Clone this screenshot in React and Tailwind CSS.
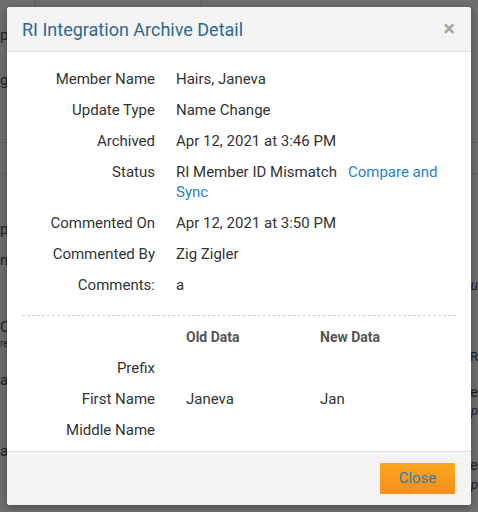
import React from 'react';

const details = [
    { label: 'Member Name', value: 'Hairs, Janeva' },
    { label: 'Update Type', value: 'Name Change' },
    { label: 'Archived', value: 'Apr 12, 2021 at 3:46 PM' },
    { label: 'Status', value: 'RI Member ID Mismatch', link: 'Compare and Sync' },
    { label: 'Commented On', value: 'Apr 12, 2021 at 3:50 PM' },
    { label: 'Commented By', value: 'Zig Zigler' },
    { label: 'Comments:', value: 'a' },
];

const changes = [
    { label: 'Prefix', old: '', next: '' },
    { label: 'First Name', old: 'Janeva', next: 'Jan' },
    { label: 'Middle Name', old: '', next: '' },
];

const Backdrop = () => (
    <div className="absolute inset-0 bg-[#6f6f6f] text-[#222] text-[15px] overflow-hidden">
        <div className="h-[6px] flex">
            <div className="w-[36px] border-r border-[#5d5d5d]" />
            <div className="w-[166px] border-r border-[#5d5d5d]" />
        </div>
        <div className="pt-[22px] leading-none">p</div>
        <div className="pt-[30px] leading-none">g</div>
        <div className="mt-[54px] border-t border-[#626262]" />
        <div className="mt-[30px] border-t border-[#626262]" />
        <div className="mt-[48px] leading-none">p</div>
        <div className="mt-[16px] leading-none">n</div>
        <div className="mt-[52px] leading-none">C</div>
        <div className="mt-[4px] text-[10px] leading-none">re</div>
        <div className="mt-[24px] leading-none">a</div>
        <div className="mt-[56px] leading-none">a</div>
        <div className="absolute right-0 top-[278px] text-[14px] italic leading-none text-right">lu</div>
        <div className="absolute right-0 top-[350px] text-[13px] leading-none">R</div>
        <div className="absolute right-0 top-[385px] leading-none">Se</div>
        <div className="absolute right-0 top-[404px] text-[13px] italic leading-none">p</div>
        <div className="absolute right-0 top-[458px] leading-none">Se</div>
        <div className="absolute right-0 top-[478px] text-[13px] italic leading-none">p</div>
    </div>
);

export default function App() {
    return (
        <div className="relative w-[478px] h-[512px] overflow-hidden" style={{ fontFamily: 'Roboto, "Liberation Sans", sans-serif' }}>
            <Backdrop />
            <div className="absolute left-[7px] top-[7px] w-[464px] h-[498px] bg-white rounded-[3px] shadow-[0_2px_8px_rgba(0,0,0,0.35)] flex flex-col overflow-hidden">
                <div className="h-[45px] shrink-0 bg-[#f4f4f4] border-b border-[#dedede] flex items-center justify-between pl-[15px] pr-[16px]">
                    <h2 className="text-[18px] text-[#2d6892] font-normal">RI Integration Archive Detail</h2>
                    <span className="text-[#a6a6a6] text-[22px] font-bold leading-none">×</span>
                </div>

                <div className="flex-1 px-[15px] pt-[17px] text-[15px] text-[#333] leading-5">
                    <div className="flex flex-col gap-[11px]">
                        {details.map((row) => (
                            <div key={row.label} className="flex">
                                <div className="w-[133px] shrink-0 text-right">{row.label}</div>
                                <div className="pl-[21px] flex-1">
                                    {row.value}
                                    {row.link && (
                                        <a className="ml-[11px] text-[#1f84c0]">{row.link}</a>
                                    )}
                                </div>
                            </div>
                        ))}
                    </div>

                    <div className="mt-[20px] border-t border-dashed border-[#cfcfcf]" />

                    <div className="mt-[11px] flex flex-col gap-[11px]">
                        <div className="flex font-bold text-[14px] text-[#555]">
                            <div className="w-[133px] shrink-0" />
                            <div className="pl-[31px] w-[165px]">Old Data</div>
                            <div>New Data</div>
                        </div>
                        {changes.map((row) => (
                            <div key={row.label} className="flex">
                                <div className="w-[133px] shrink-0 text-right">{row.label}</div>
                                <div className="pl-[31px] w-[165px]">{row.old}</div>
                                <div>{row.next}</div>
                            </div>
                        ))}
                    </div>
                </div>

                <div className="h-[54px] shrink-0 bg-[#f4f4f4] border-t border-[#dedede] flex justify-end items-start pt-[11px] pr-[16px]">
                    <button className="w-[75px] h-[31px] bg-gradient-to-b from-[#fba61d] to-[#f78f1e] text-[#2a7fb3] text-[15px] rounded-[1px]">
                        Close
                    </button>
                </div>
            </div>
        </div>
    );
}
